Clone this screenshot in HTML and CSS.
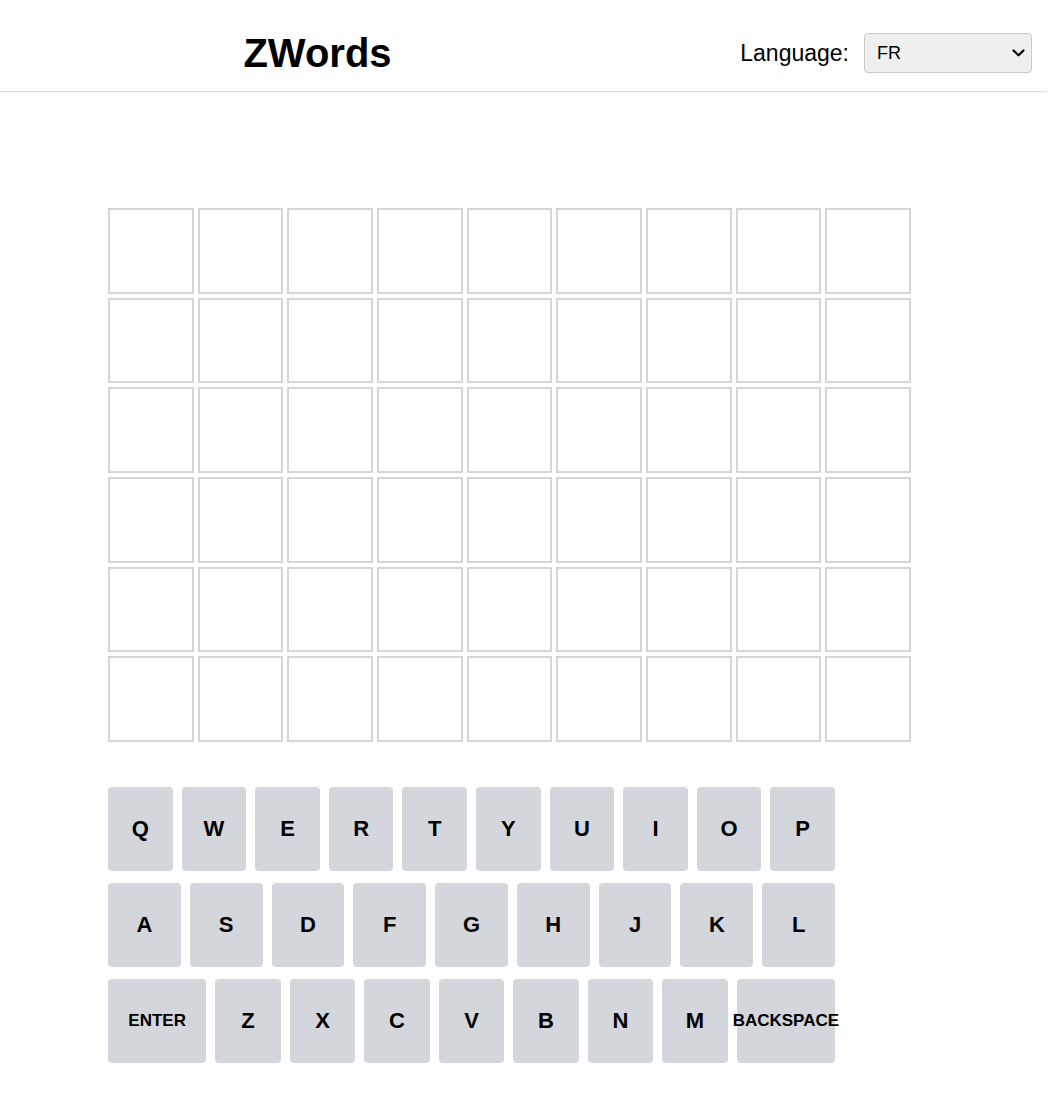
FILE: index.html
```html
<!DOCTYPE html>
<html lang="en">
<head>
<meta charset="utf-8">
<title>ZWords</title>
<link rel="stylesheet" href="styles.css">
</head>
<body>
<header class="topbar">
  <div class="brand"><h1 class="title">ZWords</h1></div>
  <div class="lang">
    <label class="lang-label" for="lang">Language:</label>
    <div class="select-wrap">
      <select id="lang" class="lang-select">
        <option>FR</option>
        <option>EN</option>
      </select>
      <svg class="chevron" width="13" height="8" viewBox="0 0 13 8"><polyline points="1.5,1.5 6.5,6.3 11.5,1.5" fill="none" stroke="#000" stroke-width="2.2" stroke-linecap="round" stroke-linejoin="round"/></svg>
    </div>
  </div>
</header>
<main class="game">
  <div class="board">
    <div class="cell"></div><div class="cell"></div><div class="cell"></div><div class="cell"></div><div class="cell"></div><div class="cell"></div><div class="cell"></div><div class="cell"></div><div class="cell"></div>
    <div class="cell"></div><div class="cell"></div><div class="cell"></div><div class="cell"></div><div class="cell"></div><div class="cell"></div><div class="cell"></div><div class="cell"></div><div class="cell"></div>
    <div class="cell"></div><div class="cell"></div><div class="cell"></div><div class="cell"></div><div class="cell"></div><div class="cell"></div><div class="cell"></div><div class="cell"></div><div class="cell"></div>
    <div class="cell"></div><div class="cell"></div><div class="cell"></div><div class="cell"></div><div class="cell"></div><div class="cell"></div><div class="cell"></div><div class="cell"></div><div class="cell"></div>
    <div class="cell"></div><div class="cell"></div><div class="cell"></div><div class="cell"></div><div class="cell"></div><div class="cell"></div><div class="cell"></div><div class="cell"></div><div class="cell"></div>
    <div class="cell"></div><div class="cell"></div><div class="cell"></div><div class="cell"></div><div class="cell"></div><div class="cell"></div><div class="cell"></div><div class="cell"></div><div class="cell"></div>
  </div>
  <div class="keyboard">
    <div class="krow">
      <button class="key">Q</button><button class="key">W</button><button class="key">E</button><button class="key">R</button><button class="key">T</button><button class="key">Y</button><button class="key">U</button><button class="key">I</button><button class="key">O</button><button class="key">P</button>
    </div>
    <div class="krow">
      <button class="key">A</button><button class="key">S</button><button class="key">D</button><button class="key">F</button><button class="key">G</button><button class="key">H</button><button class="key">J</button><button class="key">K</button><button class="key">L</button>
    </div>
    <div class="krow">
      <button class="key key-wide">ENTER</button><button class="key">Z</button><button class="key">X</button><button class="key">C</button><button class="key">V</button><button class="key">B</button><button class="key">N</button><button class="key">M</button><button class="key key-wide">BACKSPACE</button>
    </div>
  </div>
</main>
</body>
</html>
```
FILE: styles.css
```css
html, body {
  margin: 0;
  padding: 0;
  background: #ffffff;
}
body {
  font-family: "Liberation Sans", Arial, sans-serif;
  color: #000;
}
.topbar {
  width: 1047px;
  box-sizing: border-box;
  display: flex;
  align-items: center;
  padding: 33px 15px 18px 0;
  border-bottom: 1px solid #dcdcdc;
}
.brand {
  width: 635px;
  text-align: center;
}
.title {
  margin: 0;
  font-size: 40px;
  line-height: 40px;
  font-weight: 700;
}
.lang {
  margin-left: auto;
  display: flex;
  align-items: center;
  gap: 15px;
}
.lang-label {
  font-size: 23px;
  line-height: 40px;
}
.select-wrap {
  position: relative;
  width: 168px;
  height: 40px;
}
.lang-select {
  appearance: none;
  -webkit-appearance: none;
  width: 168px;
  height: 40px;
  box-sizing: border-box;
  margin: 0;
  padding: 0 30px 0 12px;
  font-family: "Liberation Sans", Arial, sans-serif;
  font-size: 18px;
  color: #000;
  background: #efefef;
  border: 1px solid #cbcbcb;
  border-radius: 4px;
}
.chevron {
  position: absolute;
  right: 7px;
  top: 16px;
  pointer-events: none;
}
.game {
  padding: 116px 0 0 108px;
}
.board {
  width: 803px;
  display: grid;
  grid-template-columns: repeat(9, 1fr);
  gap: 4px;
}
.cell {
  aspect-ratio: 1 / 1;
  box-sizing: border-box;
  border: 2px solid #d3d6da;
}
.keyboard {
  width: 727px;
  margin-top: 45px;
  display: flex;
  flex-direction: column;
  gap: 12px;
}
.krow {
  display: flex;
  gap: 9px;
}
.key {
  flex: 1 1 0;
  min-width: 0;
  height: 84px;
  margin: 0;
  padding: 0;
  border: none;
  border-radius: 4px;
  background: #d3d6da;
  color: #000;
  font-family: "Liberation Sans", Arial, sans-serif;
  font-size: 22px;
  font-weight: 700;
  display: flex;
  align-items: center;
  justify-content: center;
  white-space: nowrap;
  overflow: visible;
}
.key-wide {
  flex: 1.5 1 0;
  font-size: 17px;
}
```
